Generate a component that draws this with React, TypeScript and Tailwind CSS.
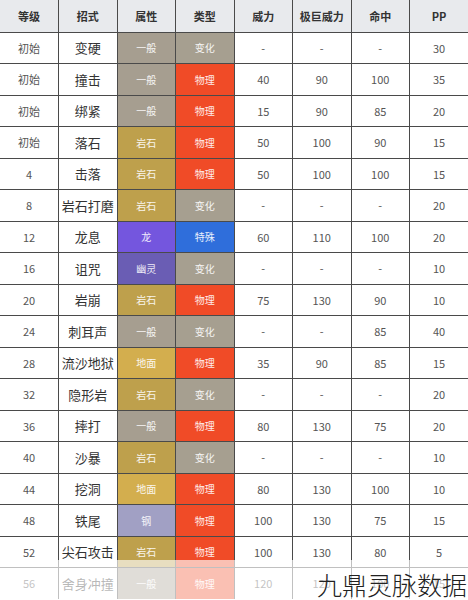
const TYPE_BG: Record<string, string> = {
  一般: "bg-[#a69e90]",
  岩石: "bg-[#bea04c]",
  地面: "bg-[#d3ae4e]",
  龙: "bg-[#7456de]",
  幽灵: "bg-[#6a5db4]",
  钢: "bg-[#a1a0c4]",
  变化: "bg-[#a69f90]",
  物理: "bg-[#f04b27]",
  特殊: "bg-[#2f6edb]",
};

const moves: string[][] = [
  ["初始", "变硬", "一般", "变化", "-", "-", "-", "30"],
  ["初始", "撞击", "一般", "物理", "40", "90", "100", "35"],
  ["初始", "绑紧", "一般", "物理", "15", "90", "85", "20"],
  ["初始", "落石", "岩石", "物理", "50", "100", "90", "15"],
  ["4", "击落", "岩石", "物理", "50", "100", "100", "15"],
  ["8", "岩石打磨", "岩石", "变化", "-", "-", "-", "20"],
  ["12", "龙息", "龙", "特殊", "60", "110", "100", "20"],
  ["16", "诅咒", "幽灵", "变化", "-", "-", "-", "10"],
  ["20", "岩崩", "岩石", "物理", "75", "130", "90", "10"],
  ["24", "刺耳声", "一般", "变化", "-", "-", "85", "40"],
  ["28", "流沙地狱", "地面", "物理", "35", "90", "85", "15"],
  ["32", "隐形岩", "岩石", "变化", "-", "-", "-", "20"],
  ["36", "摔打", "一般", "物理", "80", "130", "75", "20"],
  ["40", "沙暴", "岩石", "变化", "-", "-", "-", "10"],
  ["44", "挖洞", "地面", "物理", "80", "130", "100", "10"],
  ["48", "铁尾", "钢", "物理", "100", "130", "75", "15"],
  ["52", "尖石攻击", "岩石", "物理", "100", "130", "80", "5"],
  ["56", "舍身冲撞", "一般", "物理", "120", "120", "100", "15"],
];

const headers = ["等级", "招式", "属性", "类型", "威力", "极巨威力", "命中", "PP"];

export default function App() {
  return (
    <div
      className="relative h-[600px] w-[468px] overflow-hidden bg-white"
      style={{ fontFamily: '"Noto Sans CJK SC", "Noto Sans", sans-serif' }}
    >
      <table className="w-[468px] table-fixed border-collapse border-hidden">
        <thead>
          <tr className="h-[32px] bg-[#e8eaed]">
            {headers.map((h) => (
              <th
                key={h}
                className="border border-[#4a4a4a] text-center text-[11px] font-semibold text-[#333]"
              >
                {h}
              </th>
            ))}
          </tr>
        </thead>
        <tbody>
          {moves.map((m) => (
            <tr key={m[1]} className="h-[31.5px]">
              <td className="border border-[#4a4a4a] text-center text-[11px] text-[#555]">
                {m[0]}
              </td>
              <td className="border border-[#4a4a4a] text-center text-[13px] text-[#333]">
                {m[1]}
              </td>
              <td
                className={`border border-[#4a4a4a] text-center text-[10px] text-white/90 ${TYPE_BG[m[2]]}`}
              >
                {m[2]}
              </td>
              <td
                className={`border border-[#4a4a4a] text-center text-[10px] text-white/90 ${TYPE_BG[m[3]]}`}
              >
                {m[3]}
              </td>
              {m.slice(4).map((v, i) => (
                <td
                  key={i}
                  className="border border-[#4a4a4a] text-center text-[11px] text-[#555]"
                >
                  {v}
                </td>
              ))}
            </tr>
          ))}
        </tbody>
      </table>

      {/* faded bottom */}
      <div className="absolute bottom-0 left-0 h-[40px] w-full bg-white/65" />

      <div className="absolute bottom-[3px] right-[1px] text-[25px] leading-none font-light text-[#222]">
        九鼎灵脉数据
      </div>
    </div>
  );
}
